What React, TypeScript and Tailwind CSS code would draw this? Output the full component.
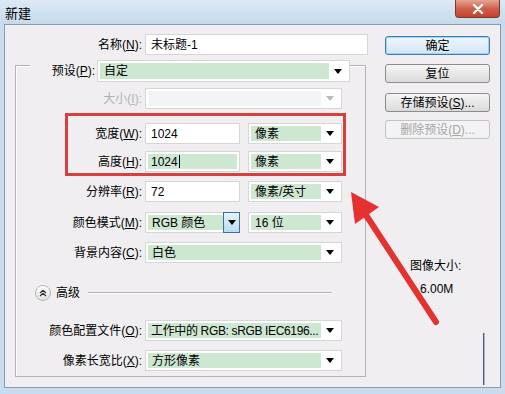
import React from "react"

const Tri = ({ gray }: { gray?: boolean }) => (
  <div className={"h-0 w-0 border-x-[4px] border-t-[5px] border-x-transparent " + (gray ? "border-t-[#b8b8b8]" : "border-t-black")} />
)

const Select = ({ text, className, disabled, tight }: { text?: string; className: string; disabled?: boolean; tight?: boolean }) => (
  <div className={"flex h-[21px] items-stretch border border-[#d6d6d6] bg-white p-[2px] " + className}>
    <div className={"flex flex-1 items-center whitespace-nowrap " + (tight ? "pl-[3px] tracking-[-0.35px] " : "pl-[4px] ") + (disabled ? "bg-[#f4f3f5]" : "bg-[#cde7d1]")}>
      {text}
    </div>
    <div className="flex w-[18px] items-center justify-center">
      <Tri gray={disabled} />
    </div>
  </div>
)

const Input = ({ text, className, green, caret }: { text: string; className: string; green?: boolean; caret?: boolean }) => (
  <div className={"flex h-[21px] items-stretch border border-[#d6d6d6] bg-white p-[2px] " + className}>
    <div className={"flex flex-1 items-center pl-[3px] " + (green ? "bg-[#cde7d1]" : "bg-white")}>
      {text}
      {caret && <span className="ml-[1px] h-[13px] w-[1px] bg-black" />}
    </div>
  </div>
)

const Row = ({ label, children, className, gray }: { label: React.ReactNode; children: React.ReactNode; className: string; gray?: boolean }) => (
  <div className={"flex h-[21px] items-center " + className}>
    <div className={"w-[129px] shrink-0 whitespace-nowrap pr-[3px] text-right " + (gray ? "text-[#b0b0b0]" : "")}>{label}</div>
    {children}
  </div>
)

const Btn = ({ text, className }: { text: React.ReactNode; className: string }) => (
  <div className={"ml-[15px] flex h-[19px] w-[105px] items-center justify-center rounded-[3px] border " + className}>{text}</div>
)

export default function App() {
  return (
    <div className="relative h-[394px] w-[505px] overflow-hidden bg-[#c9dbee] font-['Liberation_Sans','Noto_Sans_CJK_SC',sans-serif] text-[12px] text-black">
      {/* title bar */}
      <div className="flex h-[24px] items-start bg-gradient-to-b from-[#dde9f6] to-[#c6d9ec]">
        <span className="ml-[5px] mt-[4px] text-[13px]">新建</span>
        <div className="ml-auto mr-[5px] flex h-[18px] w-[45px] items-center justify-center rounded-b-[4px] border border-t-0 border-[#7a3a30] bg-gradient-to-b from-[#e6a394] via-[#d0604b] to-[#c2412c]">
          <svg width="12" height="10" viewBox="0 0 12 10">
            <path d="M2 1 L10 9 M10 1 L2 9" stroke="white" strokeWidth="2.4" strokeLinecap="round" />
          </svg>
        </div>
      </div>

      {/* dialog body */}
      <div className="mx-[4px] flex h-[364px] border border-[#8a9cb0] bg-[#f0eef1]">
        <div className="w-[365px] shrink-0">
          <div className="mt-[9px] flex h-[21px] items-center">
            <div className="w-[140px] shrink-0 pr-[3px] text-right">名称(<u>N</u>):</div>
            <Input text="未标题-1" className="w-[223px]" />
          </div>

          <div className="ml-[10px] mt-[10px] h-[312px] w-[351px] border border-[#b4b1b8] shadow-[inset_1px_1px_0_#ffffff]">
            <div className="-mt-[6px] ml-[14px] flex h-[22px] w-[320px] items-center justify-end gap-[2px] bg-[#f0eef1]">
              <span>预设(<u>P</u>):</span>
              <Select text="自定" className="h-[22px] w-[253px]" />
            </div>

            <Row label={<>大小(<u>I</u>):</>} gray className="mt-[6px] h-[20px]">
              <Select className="h-[20px] w-[197px]" disabled />
            </Row>

            <Row label={<>宽度(<u>W</u>):</>} className="mt-[14px]">
              <Input text="1024" className="w-[95px]" />
              <Select text="像素" className="ml-[8px] w-[94px]" />
            </Row>

            <Row label={<>高度(<u>H</u>):</>} className="mt-[7px]">
              <Input text="1024" className="w-[95px]" green caret />
              <Select text="像素" className="ml-[8px] w-[94px]" />
            </Row>

            <Row label={<>分辨率(<u>R</u>):</>} className="mt-[9px]">
              <Input text="72" className="w-[95px]" />
              <Select text="像素/英寸" className="ml-[8px] w-[94px]" />
            </Row>

            <Row label={<>颜色模式(<u>M</u>):</>} className="mt-[10px]">
              <div className="flex h-[21px] w-[95px] items-stretch border border-[#d6d6d6] bg-white p-[2px]">
                <div className="flex flex-1 items-center whitespace-nowrap bg-[#cde7d1] pl-[4px]">RGB 颜色</div>
                <div className="-my-[3px] -mr-[3px] flex w-[17px] items-center justify-center border border-[#3c6f9c] bg-gradient-to-b from-[#e6f2fb] to-[#bcdcf3]">
                  <Tri />
                </div>
              </div>
              <Select text="16 位" className="ml-[8px] w-[94px]" />
            </Row>

            <Row label={<>背景内容(<u>C</u>):</>} className="mt-[9px]">
              <Select text="白色" className="w-[197px]" />
            </Row>

            <div className="ml-[19px] mt-[21px] flex h-[18px] items-center">
              <div className="flex h-[16px] w-[16px] items-center justify-center rounded-full border border-[#b5b5b5] bg-gradient-to-b from-white to-[#e2e2e2]">
                <svg width="8" height="8" viewBox="0 0 8 8">
                  <path d="M1 4 L4 1.3 L7 4 M1 7 L4 4.3 L7 7" fill="none" stroke="#333" strokeWidth="1.3" />
                </svg>
              </div>
              <span className="ml-[5px]">高级</span>
              <div className="ml-[8px] mr-[33px] h-[2px] flex-1 border-t border-b border-t-[#b4b1b8] border-b-white" />
            </div>

            <Row label={<>颜色配置文件(<u>O</u>):</>} className="mt-[18px]">
              <Select text="工作中的 RGB: sRGB IEC6196..." className="w-[197px]" tight />
            </Row>

            <Row label={<>像素长宽比(<u>X</u>):</>} className="mt-[9px]">
              <Select text="方形像素" className="w-[197px]" />
            </Row>
          </div>
        </div>

        <div className="flex-1">
          <Btn text="确定" className="mt-[11px] border-[#3d7bad] bg-gradient-to-b from-[#eef6fc] to-[#d3e6f4] shadow-[inset_0_0_0_1px_#9fd3f5]" />
          <Btn text="复位" className="mt-[9px] border-[#8c8c8c] bg-gradient-to-b from-[#f6f6f6] to-[#dadada]" />
          <Btn text={<>存储预设(<u>S</u>)...</>} className="mt-[10px] border-[#8c8c8c] bg-gradient-to-b from-[#f6f6f6] to-[#dadada]" />
          <Btn text={<>删除预设(<u>D</u>)...</>} className="mt-[8px] border-[#c2c2c2] bg-[#f3f2f4] text-[#a6a6a6]" />

          <div className="ml-[40px] mt-[118px]">图像大小:</div>
          <div className="ml-[50px] mt-[5px]">6.00M</div>
          <div className="ml-[113px] mt-[35px] h-[52px] w-[2px] border-l border-[#4e5d86] bg-[#a9b2cc]" />
        </div>
      </div>

      {/* annotation: red box + arrow */}
      <div className="pointer-events-none absolute left-[65px] top-[113px] h-[63px] w-[281px] border-[3px] border-[#d7403f]" />
      <svg className="pointer-events-none absolute left-0 top-0" width="505" height="394" viewBox="0 0 505 394">
        <path d="M436 322 L364 212" stroke="#e5312f" strokeWidth="6" strokeLinecap="round" />
        <path d="M351 192 L379 207 L355 224 Z" fill="#e5312f" />
      </svg>
    </div>
  )
}
